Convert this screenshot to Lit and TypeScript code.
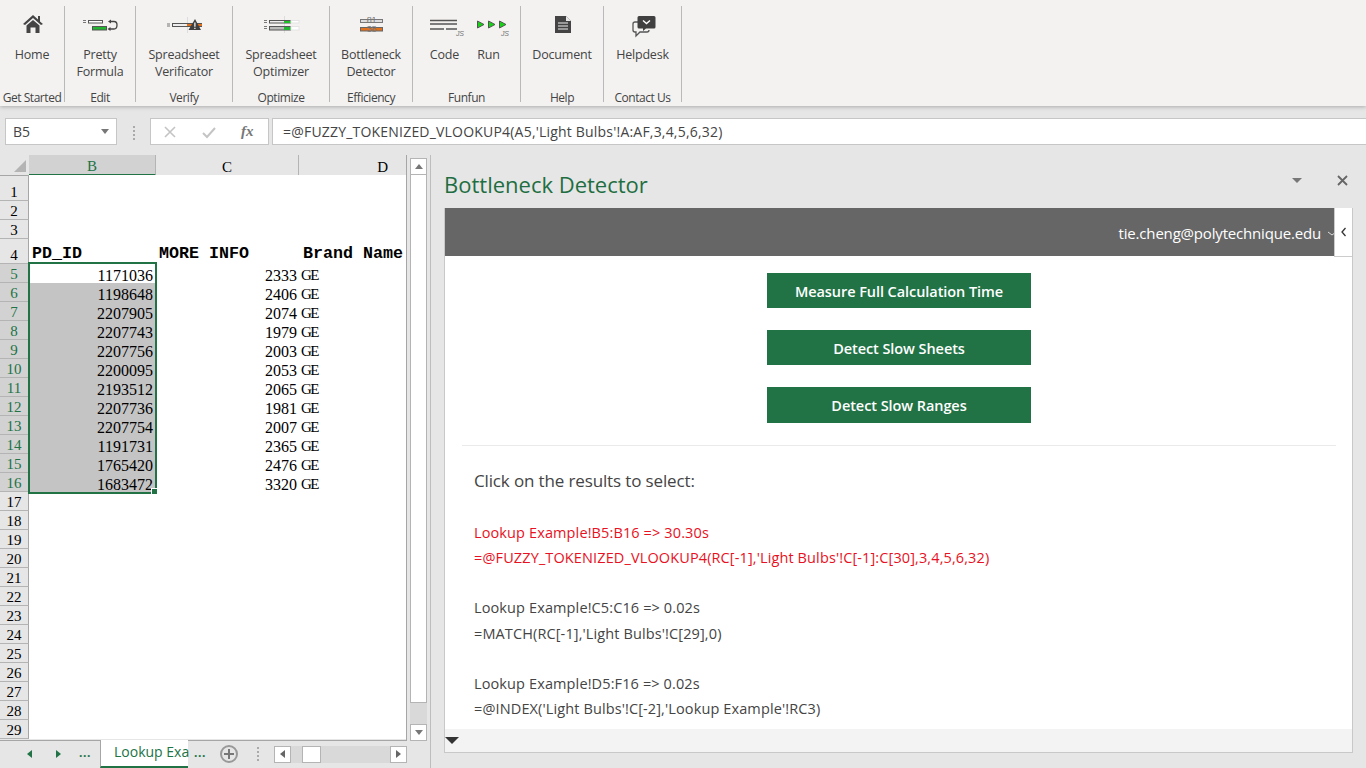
import { LitElement, html, css, svg } from "lit";
import { customElement } from "lit/decorators.js";

const D = "#444";
const dashes = (y1: number, y2: number, x: number) => svg`<path d="M${x} ${y1}h3M${x} ${y2}h3" stroke="#777" stroke-width="1" fill="none"/>`;
const icons: Record<string, any> = {
  home: svg`<path d="M21 3 L11 12 L13 13 L21 6 L29 13 L31 12 L28 9.5 V4 H26 V7.5 Z" fill="${D}"/><path d="M14.5 13.5 L21 8 L27.5 13.5 V21 H23.5 V15.5 H18.5 V21 H14.5 Z" fill="${D}"/>`,
  pretty: svg`${dashes(8.5, 10.5, 3)}<rect x="8.5" y="8.5" width="14" height="2.5" fill="#fff" stroke="#555"/><rect x="12.5" y="14.5" width="14" height="3.5" fill="#22b532" stroke="#555"/><path d="M30 9.5 H34 Q37 9.5 37 13 Q37 17 34 17 H29" fill="none" stroke="#444" stroke-width="1.3"/><path d="M31 7.5 L28 9.5 L31 11.5 Z M30.5 15 L27.5 17 L30.5 19 Z" fill="#444"/>`,
  verify: svg`<path d="M23.5 5 V21" stroke="#ddd" stroke-width="1"/>${dashes(12, 14, 3)}<rect x="8.5" y="11.5" width="29" height="3" fill="#eee" stroke="#555"/><rect x="23" y="12" width="5" height="2" fill="#e2711d"/><rect x="34" y="12" width="4" height="2" fill="#e2711d"/><path d="M31 7 L37 18 H24.5 Z" fill="#3f3f3f"/><path d="M30.9 10.5 V14.8 M30.9 15.8 V17" stroke="#fff" stroke-width="1.2"/>`,
  optimize: svg`<path d="M23.5 4 V21" stroke="#ddd" stroke-width="1"/>${dashes(8.5, 10.5, 3)}${dashes(14.5, 16.5, 3)}<rect x="8.5" y="8.5" width="21" height="2.5" fill="#eee" stroke="#555"/><rect x="23" y="9" width="7" height="2" fill="#22c028"/><rect x="8.5" y="14.5" width="21" height="3.5" fill="#bbb" stroke="#555"/><rect x="23" y="15" width="7" height="3" fill="#22b532"/><rect x="30" y="8.5" width="8" height="2.5" fill="#fff" stroke="#e4e4e4"/><rect x="30" y="14.5" width="8" height="3.5" fill="#fff" stroke="#e4e4e4"/>`,
  bottleneck: svg`<rect x="9.5" y="7.5" width="22" height="3" fill="#ddd" stroke="#777"/><rect x="9.5" y="15.5" width="22" height="3.5" fill="#e2711d" stroke="#666"/><text x="20.5" y="11" class="nb">81</text><text x="20.5" y="20" class="nb">38</text>`,
  code: svg`<path d="M5 8.5 H32 M5 12 H32 M5 17 H19 M21 17 H32" stroke="#555" stroke-width="1.3"/><text x="31" y="23.5" class="js">JS</text>`,
  run: svg`<path d="M8.5 9 L15 12.5 L8.5 16 Z M19.5 9 L26 12.5 L19.5 16 Z" fill="#14d414" stroke="#555"/><path d="M30.5 9 L37 12.5 L30.5 16 Z" fill="#14d414" stroke="#555"/><text x="32" y="23.5" class="js">JS</text>`,
  doc: svg`<path d="M13 4 H24 L29 9 V21 H13 Z" fill="#444"/><path d="M24 4 L29 9 H24 Z" fill="#e8e8e8"/><path d="M16 11 H26 M16 14 H26 M16 17 H26" stroke="#eee" stroke-width="1.2"/>`,
  help: svg`<path d="M15 10 H12 Q10 10 10 12 V18 Q10 20 12 20 H13 V24 L17 20 H24 Q26 20 26 18" fill="none" stroke="#555" stroke-width="1.3"/><path d="M16 4 H31 Q32.5 4 32.5 5.5 V15 Q32.5 16.5 31 16.5 H23 L20 19 V16.5 H16 Q14.5 16.5 14.5 15 V5.5 Q14.5 4 16 4 Z" fill="#404040"/><path d="M20 8.5 L23.5 11.5 L27 8.5" fill="none" stroke="#fff" stroke-width="1.4"/>`,
};

interface Btn { l: string[]; i: string; }
const groups: { name: string; btns: Btn[] }[] = [
  { name: "Get Started", btns: [{ l: ["Home"], i: "home" }] },
  { name: "Edit", btns: [{ l: ["Pretty", "Formula"], i: "pretty" }] },
  { name: "Verify", btns: [{ l: ["Spreadsheet", "Verificator"], i: "verify" }] },
  { name: "Optimize", btns: [{ l: ["Spreadsheet", "Optimizer"], i: "optimize" }] },
  { name: "Efficiency", btns: [{ l: ["Bottleneck", "Detector"], i: "bottleneck" }] },
  { name: "Funfun", btns: [{ l: ["Code"], i: "code" }, { l: ["Run"], i: "run" }] },
  { name: "Help", btns: [{ l: ["Document"], i: "doc" }] },
  { name: "Contact Us", btns: [{ l: ["Helpdesk"], i: "help" }] },
];

const data: [string, string][] = [
  ["1171036", "2333"], ["1198648", "2406"], ["2207905", "2074"], ["2207743", "1979"],
  ["2207756", "2003"], ["2200095", "2053"], ["2193512", "2065"], ["2207736", "1981"],
  ["2207754", "2007"], ["1191731", "2365"], ["1765420", "2476"], ["1683472", "3320"],
];

@customElement("app-root")
export class AppRoot extends LitElement {
  static styles = css`
    :host { display: block; width: 1366px; height: 768px; overflow: hidden; background: #e6e6e6; font-family: "Open Sans", "Noto Sans", sans-serif; color: #444; }
    * { box-sizing: border-box; }
    .ribbon { height: 106px; background: #f3f2f1; display: grid; grid-template-columns: 65px 71px 97px 97px 83px 108px 83px 78px; box-shadow: 0 1px 4px rgba(0,0,0,.25); position: relative; }
    .group { height: 96px; margin-top: 6px; border-right: 1px solid #b9b9b9; display: flex; flex-direction: column; align-items: center; }
    .btns { flex: 1; display: flex; justify-content: center; }
    .btn { width: 44px; display: flex; flex-direction: column; align-items: center; font-size: 12.5px; line-height: 17px; letter-spacing: -.2px; }
    .btn svg { flex: none; width: 40px; height: 30px; margin: 6px 0 4px; overflow: visible; }
    .btn .lab { white-space: nowrap; text-align: center; }
    .js { font: italic 7px "Liberation Sans", sans-serif; fill: #777; }
    .nb { font: 9px "Liberation Sans", sans-serif; fill: #777; text-anchor: middle; }
    .gname { font-size: 12px; line-height: 16px; height: 16px; margin-bottom: -4px; white-space: nowrap; letter-spacing: -.45px; }

    .fbar { height: 49px; padding: 12px 0 0 5px; display: flex; align-items: flex-start; }
    .box { height: 27px; background: #fff; border: 1px solid #c6c6c6; display: flex; align-items: center; font-size: 14px; }
    .name { width: 112px; padding: 0 7px 0 7px; justify-content: space-between; }
    .tri { width: 0; height: 0; border: 4px solid transparent; border-top: 5px solid #777; border-bottom: 0; }
    .vdots { width: 33px; display: flex; flex-direction: column; align-items: center; gap: 2px; padding-top: 8px; }
    .vdots i { width: 2px; height: 2px; background: #aaa; }
    .fx { width: 119px; margin-right: 3px; gap: 25px; padding-left: 12px; color: #aaa; }
    .fx b { font: italic 700 15px "Liberation Serif", serif; color: #777; }
    .fx svg { width: 14px; height: 14px; flex: none; }
    .formula { flex: 1; padding-left: 10px; color: #444; border-right: 0; letter-spacing: .2px; }

    .main { height: 613px; display: flex; }
    .left { width: 431px; flex: none; border-right: 1px solid #bdbdbd; display: flex; flex-direction: column; }
    .top { height: 585px; display: flex; }
    .sheet { width: 407px; border-right: 1px solid #a6a6a6; border-bottom: 1px solid #a6a6a6; overflow: hidden; position: relative; height: 586px; font-family: "Liberation Serif", serif; color: #000; }
    .r { display: grid; grid-template-columns: 29px 127px 143px 107px; height: 19px; }
    .r.head { height: 20px; }
    .r.r1 { height: 26px; }
    .r.r4 { height: 25px; }
    .corner { background: #e6e6e6; border-bottom: 1px solid #a6a6a6; position: relative; }
    .corner::after { content: ""; position: absolute; right: 3px; bottom: 3px; border: 6px solid #b4b4b4; border-top-color: transparent; border-left-color: transparent; }
    .ch { background: #e6e6e6; border-bottom: 1px solid #a6a6a6; border-right: 1px solid #b4b4b4; font-size: 15px; line-height: 16px; display: flex; align-items: center; justify-content: center; padding-top: 3px; }
    .ch.on { background: #d2d2d2; border-bottom: 2px solid #217346; color: #217346; }
    .ch.last { border-right: 0; justify-content: flex-end; padding-right: 18px; }
    .rh { background: #e6e6e6; border-bottom: 1px solid #b4b4b4; border-right: 1px solid #a6a6a6; font-size: 15px; display: flex; align-items: flex-end; justify-content: center; line-height: 15px; overflow: hidden; }
    .rh.on { background: #d2d2d2; color: #217346; }
    .c { background: #fff; font-size: 16px; line-height: 15px; white-space: nowrap; overflow: hidden; padding: 4px 3px 0; }
    .c.num { text-align: right; padding-right: 2px; }
    .c.ge { padding-left: 2px; font-size: 15px; letter-spacing: -1.5px; }
    .c.sel { background: #c4c4c4; padding-right: 3px; margin-left: 1px; }
    .c.sel.first { background: #fff; }
    .c.hd { font: 700 16.67px/20px "Liberation Mono", monospace; display: flex; align-items: flex-end; padding: 0 3px; }
    .c.hd.br { padding-left: 4px; }
    .selection { position: absolute; left: 28px; top: 107px; width: 129px; height: 232px; border: 2px solid #217346; pointer-events: none; }
    .selection::after { content: ""; position: absolute; right: -3px; bottom: -3px; width: 5px; height: 5px; background: #217346; border: 1px solid #fff; }
    .vsb { width: 17px; margin: 3px 0 0 3px; height: 583px; display: flex; flex-direction: column; background: #d9d9d9; }
    .sbtn { flex: none; width: 17px; height: 17px; background: #fff; border: 1px solid #b4b4b4; display: flex; align-items: center; justify-content: center; }
    .up { width: 0; height: 0; border: 4px solid transparent; border-bottom: 5px solid #777; border-top: 0; }
    .dn { width: 0; height: 0; border: 4px solid transparent; border-top: 5px solid #777; border-bottom: 0; }
    .lf { width: 0; height: 0; border: 4px solid transparent; border-right: 5px solid #666; border-left: 0; }
    .rt { width: 0; height: 0; border: 4px solid transparent; border-left: 5px solid #666; border-right: 0; }
    .thumb { flex: none; height: 528px; background: #fff; border: 1px solid #b4b4b4; border-top: 0; }
    .space { flex: 1; }
    .tabs { height: 28px; display: flex; align-items: center; position: relative; padding-left: 15px; }
    .nav { color: #217346; width: 29px; display: flex; justify-content: center; }
    .nav i { width: 0; height: 0; border: 4px solid transparent; }
    .nav i.l { border-right: 5px solid #217346; border-left: 0; }
    .nav i.r2 { border-left: 5px solid #217346; border-right: 0; }
    .more { color: #217346; font: 700 12px "Open Sans", sans-serif; letter-spacing: .5px; margin-top: -3px; width: 24px; text-align: center; }
    .tab { width: 88px; height: 28px; background: #fff; border-bottom: 2px solid #217346; border-left: 1px solid #a6a6a6; margin-left: 3px; padding-left: 13px; font-size: 14px; color: #217346; white-space: nowrap; line-height: 24px; }
    .plus { width: 18px; height: 18px; border-radius: 50%; border: 2px solid #999; color: #777; display: flex; align-items: center; justify-content: center; margin-left: 8px; }
    .plus svg { width: 10px; height: 10px; }
    .hdots { width: 2px; margin: 0 15px 0 19px; display: flex; flex-direction: column; gap: 2px; }
    .hdots i { width: 2px; height: 2px; background: #aaa; }
    .hsb { width: 133px; height: 17px; background: #d9d9d9; display: flex; }
    .hthumb { width: 19px; height: 17px; background: #fff; border: 1px solid #b4b4b4; margin-left: 11px; }

    .pane { flex: 1; padding: 0 13px; display: flex; flex-direction: column; position: relative; }
    .ptitle { height: 53px; display: flex; align-items: center; padding-top: 5px; font-size: 22px; color: #1e6e42; }
    .pctl { position: absolute; right: 18px; top: 20px; display: flex; align-items: center; gap: 35px; }
    .pctl .tri { border-width: 5px; border-top-width: 5px; border-bottom: 0; }
    .pctl svg { width: 11px; height: 11px; }
    .frame { width: 909px; height: 545px; border: 1px solid #c8c8c8; border-top: 0; background: #fff; display: flex; flex-direction: column; position: relative; }
    .phead { height: 48px; background: #666; color: #fff; display: flex; align-items: center; justify-content: flex-end; padding: 2px 31px 0 0; font-size: 15px; flex: none; letter-spacing: -.18px; }
    .tabber { position: absolute; right: 0; top: 0; width: 18px; height: 49px; background: #fff; border: 1px solid #ccc; border-top: 0; border-right: 0; display: flex; align-items: center; justify-content: center; padding-left: 1px; }
    .tabber svg { width: 8px; height: 10px; }
    .chev { position: absolute; right: 16px; top: 22px; width: 8px; height: 8px; }
    .pbody { flex: 1; overflow: hidden; display: flex; flex-direction: column; }
    .acts { display: flex; flex-direction: column; align-items: center; gap: 22px; padding: 17px 0 22px; margin: 0 16px 0 17px; border-bottom: 1px solid #eaeaea; }
    .acts button { width: 264px; height: 35px; background: #217346; color: #fff; border: 0; padding: 2px 0 0; font: 600 14.5px "Open Sans", sans-serif; letter-spacing: -.07px; }
    .acts button:last-child { height: 36px; padding: 0; }
    .res { padding: 22px 0 0 29px; font-size: 14.5px; line-height: 25.14px; color: #444; letter-spacing: .12px; }
    .res h4 { margin: 0 0 27px; font-weight: 400; font-size: 17px; line-height: 25px; letter-spacing: -.14px; }
    .res p { margin: 0 0 25.14px; }
    .res p.hot { color: #e81123; }
    .pfoot { height: 23px; background: #f3f3f3; flex: none; padding: 8px 0 0 0; }
    .pfoot i { display: block; width: 0; height: 0; border: 7px solid transparent; border-top: 7px solid #333; border-bottom: 0; }
  `;

  private rowNums() {
    const rows = [];
    for (let n = 17; n <= 29; n++) rows.push(html`<div class="r"><div class="rh">${n}</div><div class="c"></div><div class="c"></div><div class="c"></div></div>`);
    return rows;
  }

  render() {
    return html`
      <div class="ribbon">
        ${groups.map(g => html`<div class="group">
          <div class="btns">${g.btns.map(b => html`<div class="btn">
            <svg viewBox="0 0 40 30">${icons[b.i]}</svg>
            ${b.l.map(t => html`<div class="lab">${t}</div>`)}
          </div>`)}</div>
          <div class="gname">${g.name}</div>
        </div>`)}
      </div>
      <div class="fbar">
        <div class="box name"><span>B5</span><span class="tri"></span></div>
        <div class="vdots"><i></i><i></i><i></i><i></i></div>
        <div class="box fx">
          <svg viewBox="0 0 14 14"><path d="M2 2 L12 12 M12 2 L2 12" stroke="#c4c4c4" stroke-width="1.6" fill="none"/></svg>
          <svg viewBox="0 0 14 14"><path d="M1 8 L5 12 L13 3" stroke="#c4c4c4" stroke-width="2" fill="none"/></svg>
          <b>fx</b>
        </div>
        <div class="box formula">=@FUZZY_TOKENIZED_VLOOKUP4(A5,'Light Bulbs'!A:AF,3,4,5,6,32)</div>
      </div>
      <div class="main">
        <div class="left">
          <div class="top">
            <div class="sheet">
              <div class="r head"><div class="corner"></div><div class="ch on">B</div><div class="ch">C</div><div class="ch last">D</div></div>
              <div class="r r1"><div class="rh">1</div><div class="c"></div><div class="c"></div><div class="c"></div></div>
              <div class="r"><div class="rh">2</div><div class="c"></div><div class="c"></div><div class="c"></div></div>
              <div class="r"><div class="rh">3</div><div class="c"></div><div class="c"></div><div class="c"></div></div>
              <div class="r r4"><div class="rh">4</div><div class="c hd">PD_ID</div><div class="c hd">MORE INFO</div><div class="c hd br">Brand Name</div></div>
              ${data.map((d, i) => html`<div class="r"><div class="rh on">${i + 5}</div><div class="c num sel ${i === 0 ? "first" : ""}">${d[0]}</div><div class="c num">${d[1]}</div><div class="c ge">GE</div></div>`)}
              ${this.rowNums()}
              <div class="selection"></div>
            </div>
            <div class="vsb">
              <div class="sbtn"><span class="up"></span></div>
              <div class="thumb"></div>
              <div class="space"></div>
              <div class="sbtn"><span class="dn"></span></div>
            </div>
          </div>
          <div class="tabs">
            <div class="nav"><i class="l"></i></div>
            <div class="nav"><i class="r2"></i></div>
            <div class="more">...</div>
            <div class="tab">Lookup Exa</div>
            <div class="more">...</div>
            <div class="plus"><svg viewBox="0 0 10 10"><path d="M5 0 V10 M0 5 H10" stroke="#777" stroke-width="2"/></svg></div>
            <div class="hdots"><i></i><i></i><i></i><i></i></div>
            <div class="hsb">
              <div class="sbtn"><span class="lf"></span></div>
              <div class="hthumb"></div>
              <div class="space"></div>
              <div class="sbtn"><span class="rt"></span></div>
            </div>
          </div>
        </div>
        <div class="pane">
          <div class="ptitle">Bottleneck Detector</div>
          <div class="pctl">
            <span class="tri"></span>
            <svg viewBox="0 0 11 11"><path d="M1 1 L10 10 M10 1 L1 10" stroke="#666" stroke-width="1.8"/></svg>
          </div>
          <div class="frame">
            <div class="phead">tie.cheng@polytechnique.edu</div>
            <svg class="chev" viewBox="0 0 8 8"><path d="M0 2 L4 5 L8 2" stroke="#ddd" fill="none"/></svg>
            <div class="tabber"><svg viewBox="0 0 8 10"><path d="M5.5 1 L2 5 L5.5 9" stroke="#333" stroke-width="1.3" fill="none"/></svg></div>
            <div class="pbody">
              <div class="acts">
                <button>Measure Full Calculation Time</button>
                <button>Detect Slow Sheets</button>
                <button>Detect Slow Ranges</button>
              </div>
              <div class="res">
                <h4>Click on the results to select:</h4>
                <p class="hot">Lookup Example!B5:B16 => 30.30s<br>=@FUZZY_TOKENIZED_VLOOKUP4(RC[-1],'Light Bulbs'!C[-1]:C[30],3,4,5,6,32)</p>
                <p>Lookup Example!C5:C16 => 0.02s<br>=MATCH(RC[-1],'Light Bulbs'!C[29],0)</p>
                <p>Lookup Example!D5:F16 => 0.02s<br>=@INDEX('Light Bulbs'!C[-2],'Lookup Example'!RC3)</p>
              </div>
            </div>
            <div class="pfoot"><i></i></div>
          </div>
        </div>
      </div>
    `;
  }
}
